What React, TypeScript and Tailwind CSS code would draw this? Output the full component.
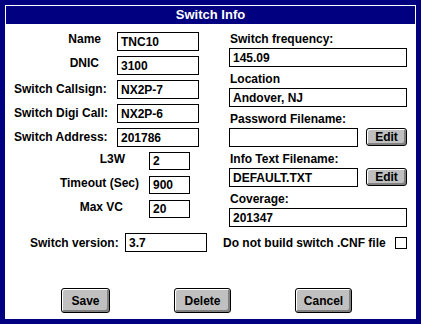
const field = "flex items-center h-[19px] border border-black bg-white pl-[3px] text-[12px] font-bold leading-[14px]";
const btn =
  "flex items-center justify-center border border-black rounded-[3px] bg-[#c0c0c0] text-[12px] font-bold shadow-[inset_1px_1px_0_#fff,inset_-2px_-2px_0_#808080]";

const Field = ({ value, w }: { value: string; w: string }) => (
  <div className={`${field} ${w}`}>{value}</div>
);

const App = () => {
  return (
    <div
      className="w-[421px] h-[324px] bg-[#000080] p-[5px] text-black"
      style={{ fontFamily: '"Liberation Sans", Arial, sans-serif' }}
    >
      <div className="flex flex-col h-full bg-white p-[1px]">
        <div className="flex items-center justify-center h-[18px] bg-[#000080] text-white text-[13px] font-bold">
          Switch Info
        </div>

        <div className="flex">
          {/* left column */}
          <div className="flex flex-col w-[223px] pt-[8px] gap-[5px] text-[12px] font-bold leading-[14px]">
            <div className="flex h-[19px]">
              <div className="w-[111px] text-right pr-[16px]">Name</div>
              <Field value="TNC10" w="w-[82px]" />
            </div>
            <div className="flex h-[19px]">
              <div className="w-[111px] text-right pr-[18px]">DNIC</div>
              <Field value="3100" w="w-[82px]" />
            </div>
            <div className="flex h-[19px]">
              <div className="w-[111px] pl-[8px] pt-[2px]">Switch Callsign:</div>
              <Field value="NX2P-7" w="w-[82px]" />
            </div>
            <div className="flex h-[19px]">
              <div className="w-[111px] pl-[8px] pt-[2px]">Switch Digi Call:</div>
              <Field value="NX2P-6" w="w-[82px]" />
            </div>
            <div className="flex h-[19px]">
              <div className="w-[111px] pl-[8px] pt-[2px]">Switch Address:</div>
              <Field value="201786" w="w-[82px]" />
            </div>
            <div className="flex flex-col gap-[6px]">
              <div className="flex h-[18px]">
                <div className="w-[143px] text-right pr-[24px]">L3W</div>
                <div className="flex items-center h-[18px] w-[41px] border border-black pl-[3px]">2</div>
              </div>
              <div className="flex h-[18px]">
                <div className="w-[143px] text-right pr-[10px]">Timeout (Sec)</div>
                <div className="flex items-center h-[18px] w-[41px] border border-black pl-[3px]">900</div>
              </div>
              <div className="flex h-[18px]">
                <div className="w-[143px] text-right pr-[26px]">Max VC</div>
                <div className="flex items-center h-[18px] w-[41px] border border-black pl-[3px]">20</div>
              </div>
            </div>
          </div>

          {/* right column */}
          <div className="flex flex-col w-[178px] pt-[8px] gap-[5px] text-[12px] font-bold leading-[14px]">
            <div>
              <div className="h-[16px] pl-[1px]">Switch frequency:</div>
              <Field value="145.09" w="w-[178px]" />
            </div>
            <div>
              <div className="h-[16px] pl-[1px]">Location</div>
              <Field value="Andover, NJ" w="w-[178px]" />
            </div>
            <div>
              <div className="h-[16px] pl-[1px]">Password Filename:</div>
              <div className="flex items-start gap-[8px]">
                <Field value="" w="w-[129px]" />
                <div className={`${btn} h-[18px] w-[41px]`}>Edit</div>
              </div>
            </div>
            <div>
              <div className="h-[16px] pl-[1px]">Info Text Filename:</div>
              <div className="flex items-start gap-[8px]">
                <Field value="DEFAULT.TXT" w="w-[129px]" />
                <div className={`${btn} h-[18px] w-[41px]`}>Edit</div>
              </div>
            </div>
            <div>
              <div className="h-[16px] pl-[1px]">Coverage:</div>
              <Field value="201347" w="w-[178px]" />
            </div>
          </div>
        </div>

        {/* version + checkbox */}
        <div className="flex items-center h-[19px] mt-[6px] text-[12px] font-bold leading-[14px]">
          <div className="w-[95px] ml-[24px]">Switch version:</div>
          <Field value="3.7" w="w-[82px]" />
          <div className="ml-[16px]">Do not build switch .CNF file</div>
          <div className="w-[12px] h-[12px] ml-[9px] border border-black bg-white" />
        </div>

        {/* buttons */}
        <div className="flex mt-[36px] pl-[55px] gap-[64px]">
          <div className={`${btn} h-[25px] w-[49px]`}>Save</div>
          <div className={`${btn} h-[25px] w-[57px]`}>Delete</div>
          <div className={`${btn} h-[25px] w-[57px]`}>Cancel</div>
        </div>
      </div>
    </div>
  );
};

export default App;
